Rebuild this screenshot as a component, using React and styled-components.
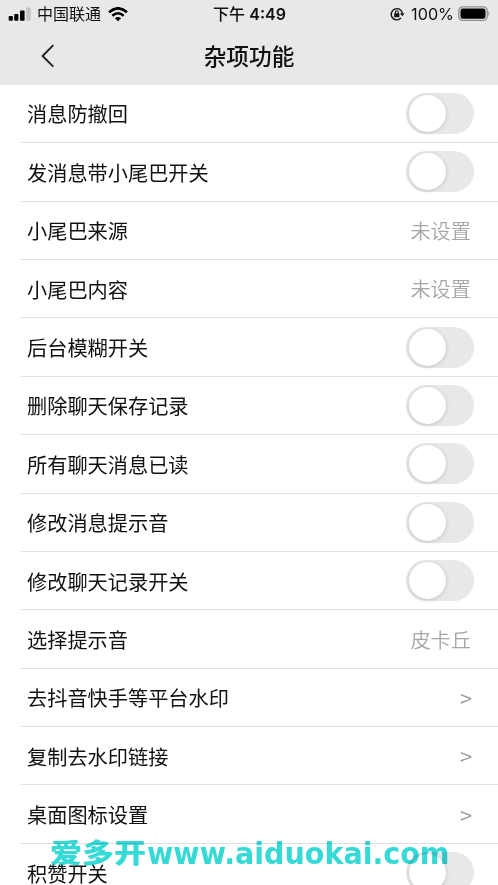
import React, { useState } from "react";
import styled, { createGlobalStyle } from "styled-components";

const settings = [
	{ label: "消息防撤回", type: "switch" },
	{ label: "发消息带小尾巴开关", type: "switch" },
	{ label: "小尾巴来源", value: "未设置" },
	{ label: "小尾巴内容", value: "未设置" },
	{ label: "后台模糊开关", type: "switch" },
	{ label: "删除聊天保存记录", type: "switch" },
	{ label: "所有聊天消息已读", type: "switch" },
	{ label: "修改消息提示音", type: "switch" },
	{ label: "修改聊天记录开关", type: "switch" },
	{ label: "选择提示音", value: "皮卡丘" },
	{ label: "去抖音快手等平台水印", type: "link" },
	{ label: "复制去水印链接", type: "link" },
	{ label: "桌面图标设置", type: "link" },
	{ label: "积赞开关", type: "switch" },
];

const SignalIcon = () => (
	<svg width="24" height="16" viewBox="0 0 24 16">
		<rect x="0.7" y="10" width="4.2" height="4.8" rx="1" />
		<rect x="6.2" y="8" width="4.2" height="6.8" rx="1" />
		<rect x="12" y="4.5" width="4.6" height="10.3" rx="1" />
		<rect x="18.3" y="1.5" width="4.4" height="13.3" rx="1" fill="#c4c4c4" />
	</svg>
);

const WifiIcon = () => (
	<svg width="20" height="15" viewBox="0 0 20 15" fill="none" stroke="#000">
		<path d="M1 5.2Q10-2.6 19 5.2" strokeWidth="2.6" />
		<path d="M4.3 8.7Q10 3.9 15.7 8.7" strokeWidth="2.5" />
		<path d="M10 14.3L6.9 11.2Q10 8.7 13.1 11.2Z" fill="#000" stroke="none" />
	</svg>
);

const LockIcon = () => (
	<svg width="15" height="14" viewBox="0 0 15 14" fill="none" stroke="#111">
		<path d="M10.9 11.1A5.6 5.6 0 1 1 12.3 6" strokeWidth="1.4" />
		<path d="M9.9 6.2h4.7l-2.3 3z" fill="#111" stroke="none" />
		<rect x="4.2" y="6.2" width="5.2" height="4" rx="0.5" fill="#111" stroke="none" />
		<path d="M5.4 6.6V5.2a1.4 1.4 0 0 1 2.8 0v1.4" strokeWidth="1.1" />
	</svg>
);

const BatteryIcon = () => (
	<svg width="33" height="16" viewBox="0 0 33 16">
		<rect x="0.8" y="0.8" width="28.4" height="13.6" rx="4" fill="none" stroke="#8d8d8d" strokeWidth="1.3" />
		<rect x="2.5" y="2.5" width="25" height="10.2" rx="2.2" />
		<path d="M30.4 5.2q2.1 2.4 0 4.8z" fill="#8d8d8d" />
	</svg>
);

const BackIcon = () => (
	<svg width="14" height="24" viewBox="0 0 14 24" fill="none" stroke="#222" strokeWidth="1.9">
		<path d="M11.8 1.6L1.6 12L11.8 22.2" strokeLinecap="round" strokeLinejoin="round" />
	</svg>
);

const SettingRow = ({ label, type, value }) => {
	const [on, setOn] = useState(false);

	return (
		<Row>
			<Label>{label}</Label>
			{type === "switch" && (
				<Switch
					role="switch"
					aria-checked={on}
					$on={on}
					onClick={() => setOn(!on)}
				/>
			)}
			{type === "link" && <Arrow>&gt;</Arrow>}
			{value && <Value>{value}</Value>}
		</Row>
	);
};

const App = () => {
	return (
		<Screen>
			<GlobalStyle />
			<Header>
				<StatusBar>
					<Carrier>
						<SignalIcon />
						<span>中国联通</span>
						<WifiIcon />
					</Carrier>
					<Clock>
						下午 <b>4:49</b>
					</Clock>
					<Power>
						<LockIcon />
						<span>100%</span>
						<BatteryIcon />
					</Power>
				</StatusBar>
				<TitleBar>
					<BackButton>
						<BackIcon />
					</BackButton>
					<h1>杂项功能</h1>
				</TitleBar>
			</Header>
			<List>
				{settings.map((item) => (
					<SettingRow key={item.label} {...item} />
				))}
			</List>
			<Watermark>
				<WatermarkName>爱多开</WatermarkName>
				<WatermarkSite>www.aiduokai.com</WatermarkSite>
			</Watermark>
		</Screen>
	);
};

export default App;

const GlobalStyle = createGlobalStyle`
	* {
		box-sizing: border-box;
	}
	body {
		margin: 0;
		overflow: hidden;
		background: #fff;
		font-family: Inter, "Noto Sans CJK SC", sans-serif;
	}
	svg {
		display: block;
		flex: none;
	}
`;

const Screen = styled.div`
	position: relative;
	width: 498px;
	height: 885px;
	overflow: hidden;
	background: #fff;
	color: #111;
`;

const Header = styled.header`
	height: 84.8px;
	background: #e8e8e8;
`;

const StatusBar = styled.div`
	display: grid;
	grid-template-columns: 1fr auto 1fr;
	align-items: center;
	height: 28px;
	padding: 0 7px 0 8px;
	font-size: 16px;
	line-height: 28px;
	white-space: nowrap;
`;

const Carrier = styled.div`
	display: flex;
	align-items: center;

	span {
		margin: 0 7px 0 5px;
		padding-top: 1px;
		line-height: 27px;
	}
`;

const Clock = styled.div`
	font-weight: 500;
	line-height: 28px;

	b {
		font-weight: 600;
	}
`;

const Power = styled.div`
	display: flex;
	align-items: center;
	justify-content: flex-end;

	span {
		margin: 0 4px 0 6px;
		font-size: 16.2px;
	}
`;

const TitleBar = styled.div`
	display: grid;
	grid-template-columns: 64px 1fr 64px;
	align-items: center;
	height: 56px;

	h1 {
		margin: 0;
		padding-top: 2px;
		font-size: 22.7px;
		font-weight: 500;
		line-height: 54px;
		text-align: center;
	}
`;

const BackButton = styled.button`
	display: flex;
	padding: 0 0 0 41px;
	border: 0;
	background: none;
`;

const List = styled.main`
	padding-left: 21px;
`;

const Row = styled.div`
	display: flex;
	align-items: center;
	justify-content: space-between;
	height: 58.4px;
	padding: 0 24px 0 6px;
	border-bottom: 1px solid #e0e0e0;
`;

const Label = styled.span`
	padding-top: 4px;
	font-size: 20.2px;
	line-height: 30px;
`;

const Value = styled.span`
	margin-right: 3px;
	padding-top: 1px;
	color: #a6a6a6;
	font-family: "Noto Sans CJK SC", sans-serif;
	font-size: 20.2px;
	font-weight: 350;
	line-height: 30px;
`;

const Arrow = styled.span`
	margin-right: 2px;
	color: #999;
	font-family: "Noto Sans CJK SC", sans-serif;
	font-size: 22px;
	font-weight: 350;
	line-height: 29px;
`;

const Switch = styled.button`
	width: 68px;
	height: 41px;
	padding: 2px 3px;
	border: 0;
	border-radius: 21px;
	background: ${({ $on }) => ($on ? "#34c759" : "#e8e8ea")};

	&::before {
		content: "";
		display: block;
		width: 37px;
		height: 37px;
		margin-left: ${({ $on }) => ($on ? "25px" : "0")};
		border-radius: 50%;
		background: #fff;
		box-shadow: 0 1px 4px rgba(0, 0, 0, 0.17);
	}
`;

const Watermark = styled.div`
	position: absolute;
	left: 50px;
	top: 832px;
	display: flex;
	align-items: center;
	height: 40px;
	color: #35d9d5;
	line-height: 40px;
	white-space: nowrap;
	pointer-events: none;
	mix-blend-mode: multiply;
`;

const WatermarkName = styled.span`
	width: 97px;
	font-family: "Noto Sans CJK SC", sans-serif;
	font-size: 32px;
	font-weight: 900;
	transform: translateY(-1px) scaleY(0.84);
`;

const WatermarkSite = styled.span`
	font-family: "DejaVu Sans", sans-serif;
	font-size: 28.2px;
	font-weight: bold;
	transform: translateY(2px) scale(1.012, 1.08);
	transform-origin: left center;
`;
